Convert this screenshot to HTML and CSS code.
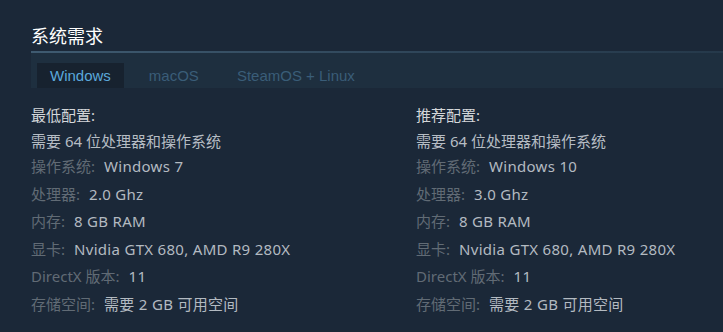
FILE: index.html
```html
<!DOCTYPE html>
<html lang="zh-CN">
<head>
  <meta charset="UTF-8" />
  <meta name="viewport" content="width=device-width, initial-scale=1.0"/>
  <title>系统需求</title>
  <link rel="stylesheet" href="styles.css">
</head>
<body>

  <div class="sysreq">
    <h2 class="sysreq-title">系统需求</h2>

    <!-- Platform tabs -->
    <div class="sysreq-tabs">
      <div class="tab active">Windows</div>
      <div class="tab">macOS</div>
      <div class="tab">SteamOS + Linux</div>
    </div>

    <div class="sysreq-contents">
      <div class="req-col">
        <div class="req-head">最低配置:</div>
        <div class="req-note">需要 64 位处理器和操作系统</div>
        <ul class="req-list">
          <li><span class="label">操作系统:</span><span class="value">Windows 7</span></li>
          <li><span class="label">处理器:</span><span class="value">2.0 Ghz</span></li>
          <li><span class="label">内存:</span><span class="value">8 GB RAM</span></li>
          <li><span class="label">显卡:</span><span class="value">Nvidia GTX 680, AMD R9 280X</span></li>
          <li><span class="label">DirectX 版本:</span><span class="value">11</span></li>
          <li><span class="label">存储空间:</span><span class="value">需要 2 GB 可用空间</span></li>
        </ul>
      </div>

      <div class="req-col">
        <div class="req-head">推荐配置:</div>
        <div class="req-note">需要 64 位处理器和操作系统</div>
        <ul class="req-list">
          <li><span class="label">操作系统:</span><span class="value">Windows 10</span></li>
          <li><span class="label">处理器:</span><span class="value">3.0 Ghz</span></li>
          <li><span class="label">内存:</span><span class="value">8 GB RAM</span></li>
          <li><span class="label">显卡:</span><span class="value">Nvidia GTX 680, AMD R9 280X</span></li>
          <li><span class="label">DirectX 版本:</span><span class="value">11</span></li>
          <li><span class="label">存储空间:</span><span class="value">需要 2 GB 可用空间</span></li>
        </ul>
      </div>
    </div>
  </div>

</body>
</html>
```

FILE: styles.css
```css
*, *::before, *::after {
  box-sizing: border-box;
}

body, html {
  margin: 0;
  padding: 0;
  width: 100%;
  height: 100%;
  background: #1b2838;
  font-family: 'Noto Sans', 'Noto Sans CJK SC', sans-serif;
  overflow: hidden;
}

.sysreq {
  width: 801px;
  padding: 24px 0 0 31px;
}

.sysreq-title {
  margin: 0;
  padding-bottom: 3px;
  font-size: 18px;
  font-weight: 400;
  line-height: 24px;
  color: #ffffff;
  border-bottom: 2px solid transparent;
  border-image: linear-gradient(to right, #3f5b71, #2c4255 60%, #233647) 1;
}

.sysreq-tabs {
  display: flex;
  gap: 12px;
  height: 35px;
  padding: 10px 0 0 6px;
  background: #1e2f3f;
}

.tab {
  padding: 0 13px;
  line-height: 25px;
  font-family: 'Liberation Sans', Arial, sans-serif;
  font-size: 15px;
  color: #3a5d78;
}

.tab.active {
  background: #17222f;
  color: #5ba8db;
}

.sysreq-contents {
  display: grid;
  grid-template-columns: 385px 385px;
  padding-top: 17px;
  font-size: 15px;
  line-height: 20px;
}

.req-head {
  color: #d4d7da;
  margin-bottom: 5.5px;
}

.req-note {
  color: #b6bdc4;
  margin-bottom: 5.5px;
}

.req-list {
  list-style: none;
  margin: 0;
  padding: 0;
}

.req-list li {
  color: #b3bac1;
  margin-bottom: 7.5px;
}

.label {
  color: #616b75;
  margin-right: 9px;
}

.value {
  letter-spacing: 0.3px;
}
```
